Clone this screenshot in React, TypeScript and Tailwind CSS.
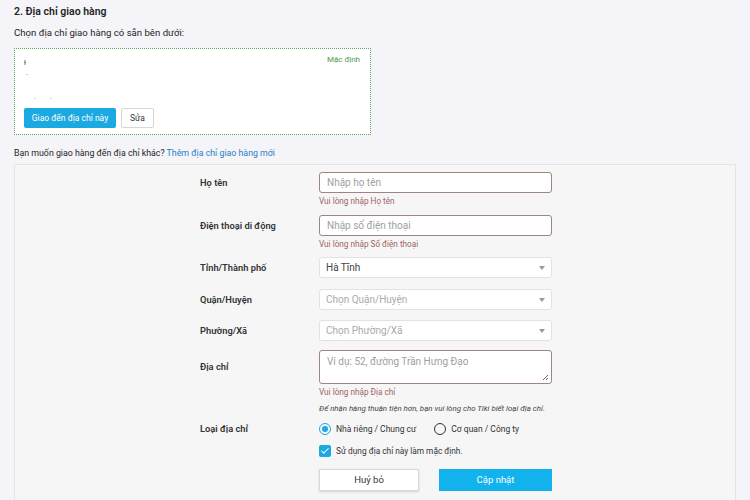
import { Check } from "lucide-react";

const font = { fontFamily: "Roboto, 'Noto Sans', sans-serif" };

function Caret() {
  return <span className="ml-auto h-0 w-0 border-x-[3px] border-t-[4px] border-x-transparent border-t-[#9a9a9a]" />;
}

function Field({ label, h, children }: { label: string; h: string; children: React.ReactNode }) {
  return (
    <div className="flex">
      <div className={`flex w-[119px] shrink-0 items-center text-[9.3px] font-semibold text-[#333] ${h}`}>{label}</div>
      <div className="w-[233px]">{children}</div>
    </div>
  );
}

function Err({ text }: { text: string }) {
  return <p className="mt-[3px] text-[8.2px] leading-[10px] text-[#a06262]">{text}</p>;
}

export default function App() {
  return (
    <div style={font} className="h-[500px] w-[750px] overflow-hidden bg-[#f4f4f9] px-[14px] pt-[5px] text-[#242424]">
      <h2 className="text-[10.5px] font-semibold leading-[14px]">2. Địa chỉ giao hàng</h2>
      <p className="mt-[7px] text-[9.6px] leading-[14px]">Chọn địa chỉ giao hàng có sẵn bên dưới:</p>

      <div className="relative mt-[8px] h-[87px] w-[357px] border border-dotted border-[#5a9f5a] bg-white px-[9px] pt-[8px]">
        <span className="absolute right-[10px] top-[5px] text-[8px] text-[#4f9a4f]">Mặc định</span>
        <div className="h-[51px] text-[7px] leading-[12px] text-[#333]">
          <div>ł</div>
          <div className="pl-[2px]">·</div>
          <div className="h-[12px]" />
          <div className="pl-[10px] text-[#777]">·&nbsp;&nbsp;&nbsp;&nbsp;&nbsp;&nbsp;&nbsp;&nbsp;·</div>
        </div>
        <div className="flex gap-[5px]">
          <button className="h-[20px] w-[92px] rounded-[2px] bg-[#1ba9e1] text-[8.5px] text-white">Giao đến địa chỉ này</button>
          <button className="h-[20px] w-[33px] rounded-[2px] border border-[#d6d6d6] bg-white text-[8.5px] text-[#333]">Sửa</button>
        </div>
      </div>

      <p className="mt-[11px] text-[8.8px] leading-[14px]">
        Bạn muốn giao hàng đến địa chỉ khác? <span className="text-[#2a7fc4]">Thêm địa chỉ giao hàng mới</span>
      </p>

      <div className="mt-[4px] h-[340px] border border-[#e4e4e4] bg-[#f6f6f6] pl-[185px] pt-[7px]">
        <Field label="Họ tên" h="h-[21px]">
          <div className="flex h-[21px] items-center rounded-[3px] border border-[#9e8585] bg-white px-[7px] text-[10px] text-[#a0a0a0]">Nhập họ tên</div>
          <Err text="Vui lòng nhập Họ tên" />
        </Field>
        <div className="h-[9px]" />
        <Field label="Điện thoại di động" h="h-[21px]">
          <div className="flex h-[21px] items-center rounded-[3px] border border-[#9e8585] bg-white px-[7px] text-[10px] text-[#a0a0a0]">Nhập số điện thoại</div>
          <Err text="Vui lòng nhập Số điện thoại" />
        </Field>
        <div className="h-[8px]" />
        <Field label="Tỉnh/Thành phố" h="h-[21px]">
          <div className="flex h-[21px] items-center rounded-[3px] border border-[#e2e2e2] bg-white px-[6px] text-[10px] text-[#444]">Hà Tĩnh<Caret /></div>
        </Field>
        <div className="h-[11px]" />
        <Field label="Quận/Huyện" h="h-[21px]">
          <div className="flex h-[21px] items-center rounded-[3px] border border-[#e2e2e2] bg-white px-[6px] text-[10px] text-[#aaa]">Chọn Quận/Huyện<Caret /></div>
        </Field>
        <div className="h-[10px]" />
        <Field label="Phường/Xã" h="h-[21px]">
          <div className="flex h-[21px] items-center rounded-[3px] border border-[#e2e2e2] bg-white px-[6px] text-[10px] text-[#aaa]">Chọn Phường/Xã<Caret /></div>
        </Field>
        <div className="h-[9px]" />
        <Field label="Địa chỉ" h="h-[34px]">
          <div className="relative h-[34px] rounded-[3px] border border-[#9e8585] bg-white px-[7px] pt-[3px] text-[10px] text-[#a0a0a0]">
            Ví dụ: 52, đường Trần Hưng Đạo
            <svg className="absolute bottom-[2px] right-[2px]" width="7" height="7" viewBox="0 0 7 7">
              <path d="M6 1L1 6M6 4L4 6" stroke="#555" strokeWidth="0.9" />
            </svg>
          </div>
          <Err text="Vui lòng nhập Địa chỉ" />
          <p className="mt-[7px] whitespace-nowrap text-[7.9px] italic leading-[10px] text-[#444]">Để nhận hàng thuận tiện hơn, bạn vui lòng cho Tiki biết loại địa chỉ.</p>
        </Field>
        <div className="mt-[7px] flex">
          <div className="flex h-[16px] w-[119px] items-center text-[9.3px] font-semibold text-[#333]">Loại địa chỉ</div>
          <div className="w-[233px]">
            <div className="flex h-[16px] items-center text-[8.5px] text-[#333]">
              <span className="flex h-[12px] w-[12px] items-center justify-center rounded-full border-[1.5px] border-[#1ba9e1]">
                <span className="h-[6px] w-[6px] rounded-full bg-[#1ba9e1]" />
              </span>
              <span className="ml-[5px]">Nhà riêng / Chung cư</span>
              <span className="ml-[18px] h-[12px] w-[12px] rounded-full border-[1.5px] border-[#333]" />
              <span className="ml-[5px]">Cơ quan / Công ty</span>
            </div>
            <div className="mt-[7px] flex h-[14px] items-center text-[8.3px] text-[#333]">
              <span className="flex h-[12px] w-[12px] items-center justify-center rounded-[2px] bg-[#1ba9e1]">
                <Check size={10} strokeWidth={2.5} color="white" />
              </span>
              <span className="ml-[5px]">Sử dụng địa chỉ này làm mặc định.</span>
            </div>
            <div className="mt-[11px] flex gap-[20px]">
              <button className="h-[22px] w-[100px] border border-[#d8d8d8] bg-white text-[9.5px] text-[#333] shadow-[0_1px_2px_rgba(0,0,0,0.15)]">Huỷ bỏ</button>
              <button className="h-[22px] w-[113px] bg-[#12b2ec] text-[9.5px] text-white">Cập nhật</button>
            </div>
          </div>
        </div>
      </div>
    </div>
  );
}
